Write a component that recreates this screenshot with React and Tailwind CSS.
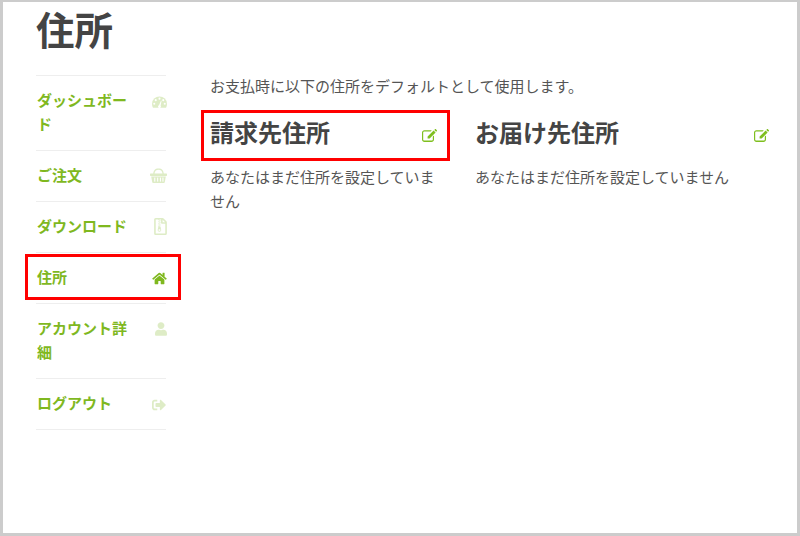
import React from "react";
import { FaRegFileArchive, FaHome, FaUser, FaSignOutAlt } from "react-icons/fa";

function Gauge({ className }) {
  return (
    <svg viewBox="0 0 16 12" className={className} fill="currentColor">
      <path d="M8 0a8 8 0 0 1 8 8c0 1.5-.4 2.8-1.1 4H1.1A8 8 0 0 1 0 8a8 8 0 0 1 8-8z" />
      <g fill="#fff">
        <circle cx="8" cy="2.4" r="1.1" />
        <circle cx="4" cy="4" r="1.1" />
        <circle cx="12" cy="4" r="1.1" />
        <circle cx="2.4" cy="7.8" r="1.1" />
        <circle cx="13.6" cy="7.8" r="1.1" />
        <path d="M7.4 9.5 9.6 4.6l.6.2-1 5.2a1.5 1.5 0 1 1-1.8-.5z" />
      </g>
    </svg>
  );
}

function Basket({ className }) {
  return (
    <svg viewBox="0 0 17 15" className={className} fill="currentColor">
      <path d="M3.2 6C3.400 2.500 5 .5 8.500.5S13.600 2.500 13.800 6h-1.300C12.300 3.200 11 1.800 8.500 1.800S4.700 3.200 4.500 6z" />
      <rect x="0" y="5.500" width="17" height="2.400" rx=".6" />
      <path d="M1.200 8.600h14.600l-1 5.400a1 1 0 0 1-1 .9H3.200a1 1 0 0 1-1-.9z" />
      <g fill="#fff">
        <rect x="4.200" y="9.600" width="1.100" height="4" />
        <rect x="7.100" y="9.600" width="1.100" height="4" />
        <rect x="9.900" y="9.600" width="1.100" height="4" />
        <rect x="12.400" y="9.600" width="1.100" height="4" />
      </g>
    </svg>
  );
}

function EditIcon({ className }) {
  return (
    <svg viewBox="0 0 15 13" className={className} fill="currentColor">
      <path d="M2.400 1.200h7.400L8.600 2.400H2.400c-.7 0-1.200.5-1.200 1.200v6.800c0 .7.5 1.200 1.200 1.200h7.200c.7 0 1.200-.5 1.200-1.200V7.600L12 6.400v4c0 1.400-1.100 2.500-2.400 2.500H2.400C1.100 12.900 0 11.800 0 10.400V3.600C0 2.300 1.100 1.200 2.400 1.200z" />
      <path d="M11.600 1.600 13.600 3.600 7.600 9.600H5.600V7.600zM12.300.9 13.100.1a.4.4 0 0 1 .6 0l1.200 1.200a.4.4 0 0 1 0 .6l-.8.8z" />
    </svg>
  );
}

const items = [
  { label: "ダッシュボード", Icon: Gauge, icon: "w-[15px] h-[12px] mt-[8px] mr-[-1px]" },
  { label: "ご注文", Icon: Basket, icon: "w-[17px] h-[15px] mt-[5px] mr-[-1px]" },
  { label: "ダウンロード", Icon: FaRegFileArchive, icon: "w-[13px] h-[17px] mt-[4px] mr-[-1px]" },
  { label: "住所", Icon: FaHome, icon: "w-[15px] h-[13px] mt-[7px] mr-[-1px]", active: true },
  { label: "アカウント詳細", Icon: FaUser, icon: "w-[12px] h-[14px] mt-[6px] mr-[-1px]" },
  { label: "ログアウト", Icon: FaSignOutAlt, icon: "w-[14px] h-[14px] mt-[7px]" },
];

function Column({ title, width, margin, box }) {
  return (
    <div className={`${width} ${margin} relative`}>
      <div className="flex items-center justify-between h-[34px]">
        <h3 className="text-[24px] leading-[34px] font-bold text-[#444444]">{title}</h3>
        <EditIcon className="w-[15px] h-[13px] text-[#7fbf1f] mt-[7px]" />
      </div>
      {box && <div className="absolute left-[-9px] top-[-5px] w-[249px] h-[51px] border-[3px] border-[#ff0000]" />}
      <p className="mt-[16px] text-[15px] leading-[24px] text-[#555555]">あなたはまだ住所を設定していません</p>
    </div>
  );
}

export default function App() {
  return (
    <div
      className="w-[800px] h-[536px] overflow-hidden bg-white border-x-[3px] border-t-[2px] border-b-[3px] border-[#cccccc]"
      style={{ fontFamily: '"Noto Sans CJK JP", "Liberation Sans", sans-serif' }}
    >
      <h1 className="pl-[33px] h-[73px] pt-[1px] text-[38.500px] leading-[50px] font-bold text-[#444444]">住所</h1>
      <div className="flex">
        <ul className="ml-[33px] w-[130px] shrink-0 border-t border-[#eeeeee]">
          {items.map(({ label, Icon, icon, active }) => (
            <li key={label} className="relative flex justify-between border-b border-[#eeeeee] pt-[12px] pb-[14px]">
              <span className="pl-[1px] w-[100px] text-[15px] leading-[24px] font-bold text-[#7fb81f]">{label}</span>
              <Icon className={`${icon} ${active ? "text-[#7fb81f]" : "text-[#7fb81f] opacity-25"}`} />
              {active && <div className="absolute left-[-11px] top-[1px] w-[156px] h-[46px] border-[3px] border-[#ff0000]" />}
            </li>
          ))}
        </ul>
        <div className="ml-[44px] flex-1 -mt-[1px]">
          <p className="text-[15px] leading-[24px] text-[#555555]">お支払時に以下の住所をデフォルトとして使用します。</p>
          <div className="flex mt-[17px]">
            <Column title="請求先住所" width="w-[227px]" margin="mr-[38px]" box />
            <Column title="お届け先住所" width="w-[294px]" margin="" />
          </div>
        </div>
      </div>
    </div>
  );
}
